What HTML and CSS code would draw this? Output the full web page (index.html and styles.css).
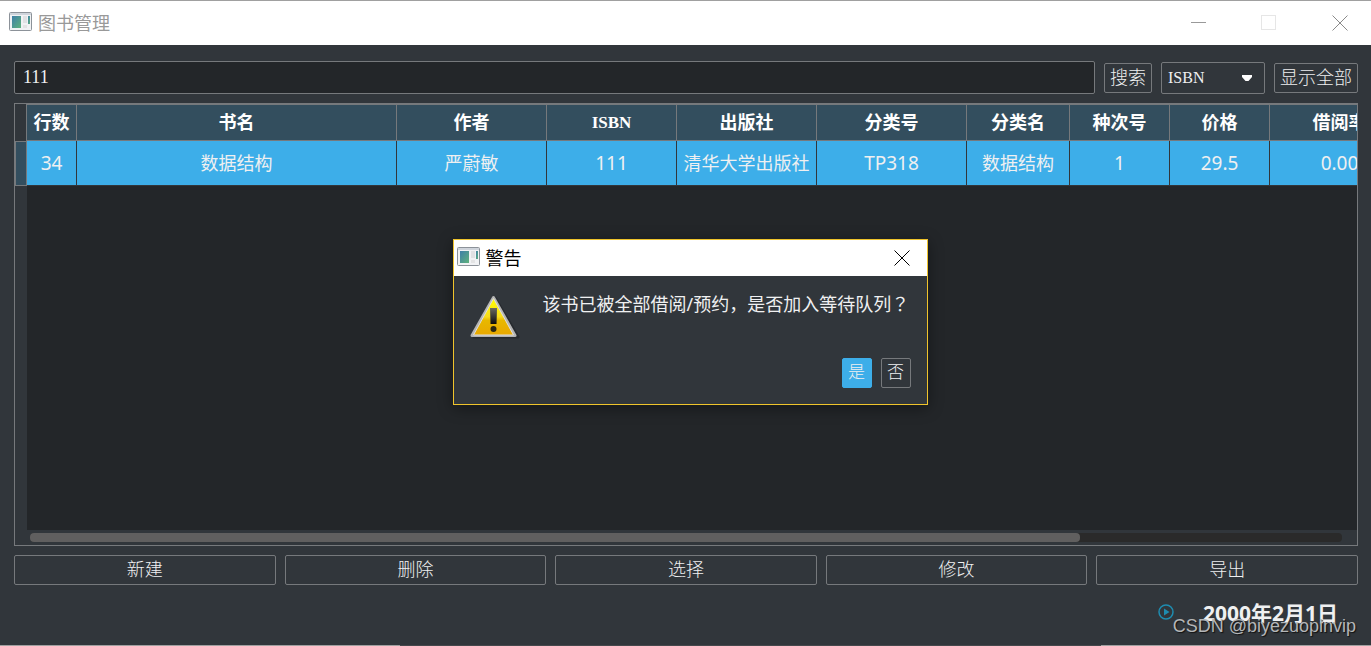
FILE: index.html
```html
<!DOCTYPE html>
<html lang="zh-CN">
<head>
    <meta charset="UTF-8">
    <meta name="viewport" content="width=device-width, initial-scale=1.0">
    <title>图书管理</title>
    <link rel="stylesheet" href="styles.css">
</head>
<body>
    <svg width="0" height="0" class="defs" aria-hidden="true">
        <defs>
            <linearGradient id="pane" x1="0" y1="0" x2="1" y2="1">
                <stop offset="0" stop-color="#3f7fa8"/>
                <stop offset="1" stop-color="#5fb27c"/>
            </linearGradient>
            <linearGradient id="yellow" x1="0" y1="0" x2="0" y2="1">
                <stop offset="0" stop-color="#ffff00"/>
                <stop offset="0.5" stop-color="#f8dc1c"/>
                <stop offset="0.6" stop-color="#e8b800"/>
                <stop offset="1" stop-color="#e9a800"/>
            </linearGradient>
            <linearGradient id="mark" x1="0" y1="0" x2="0" y2="1">
                <stop offset="0" stop-color="#6a6a60"/>
                <stop offset="1" stop-color="#0c0c0c"/>
            </linearGradient>
            <symbol id="app-icon" viewBox="0 0 24 20">
                <rect x="0.5" y="0.5" width="22" height="18" rx="1" fill="#f1f2f4" stroke="#8c9299"/>
                <rect x="1" y="1" width="21" height="2" fill="#cfd4db"/>
                <rect x="3" y="4" width="9" height="12" fill="url(#pane)"/>
                <rect x="14" y="4" width="4" height="7" fill="#e0e1e3"/>
                <rect x="14" y="13" width="4" height="3" fill="#e3e3e4"/>
                <rect x="19" y="4" width="2" height="8" fill="url(#pane)"/>
            </symbol>
        </defs>
    </svg>

    <header class="titlebar">
        <svg class="app-icon"><use href="#app-icon"/></svg>
        <h1>图书管理</h1>
        <div class="window-buttons">
            <button type="button" aria-label="最小化">
                <svg width="16" height="16"><path d="M0 7.5H15" stroke="#999"/></svg>
            </button>
            <button type="button" aria-label="最大化" disabled>
                <svg width="16" height="16"><rect x="0.5" y="0.5" width="14" height="14" fill="none" stroke="#e6e6e6"/></svg>
            </button>
            <button type="button" aria-label="关闭">
                <svg width="16" height="16"><path d="M0.5 0.5L15.5 15.5M15.5 0.5L0.5 15.5" stroke="#8a8a8a"/></svg>
            </button>
        </div>
    </header>

    <main>
        <form class="search">
            <input type="text" id="keyword" value="111" aria-label="关键字">
            <button type="button">搜索</button>
            <div class="select">
                <select aria-label="搜索字段">
                    <option>ISBN</option>
                    <option>书名</option>
                    <option>作者</option>
                </select>
                <svg width="12" height="8"><path d="M1 1H11V3L7.500 7H4.500L1 3Z" fill="#fff"/></svg>
            </div>
            <button type="button">显示全部</button>
        </form>

        <div class="grid">
            <div class="view">
                <table>
                    <colgroup>
                        <col class="w-mark"><col class="w-row"><col class="w-title"><col class="w-author">
                        <col class="w-isbn"><col class="w-press"><col class="w-code"><col class="w-class">
                        <col class="w-num"><col class="w-num"><col class="w-rate">
                    </colgroup>
                    <thead>
                        <tr>
                            <td class="corner"></td>
                            <th>行数</th>
                            <th>书名</th>
                            <th>作者</th>
                            <th class="latin">ISBN</th>
                            <th>出版社</th>
                            <th>分类号</th>
                            <th>分类名</th>
                            <th>种次号</th>
                            <th>价格</th>
                            <th>借阅率</th>
                        </tr>
                    </thead>
                    <tbody>
                        <tr>
                            <td class="marker"></td>
                            <td class="num">34</td>
                            <td>数据结构</td>
                            <td>严蔚敏</td>
                            <td class="num">111</td>
                            <td>清华大学出版社</td>
                            <td class="num">TP318</td>
                            <td>数据结构</td>
                            <td class="num">1</td>
                            <td class="num">29.5</td>
                            <td class="num">0.00</td>
                        </tr>
                    </tbody>
                </table>
            </div>
            <div class="scrollbar">
                <div class="track"><div class="thumb"></div></div>
            </div>
        </div>

        <div class="actions">
            <button type="button">新建</button>
            <button type="button">删除</button>
            <button type="button">选择</button>
            <button type="button">修改</button>
            <button type="button">导出</button>
        </div>
    </main>

    <footer>
        <svg width="16" height="16"><circle cx="8" cy="8" r="7" fill="none" stroke="#1e8cb0" stroke-width="1.500"/><path d="M6 4.500L11.500 8L6 11.500Z" fill="#1e8cb0"/></svg>
        <time datetime="2000-02-01">2000年2月1日</time>
        <span class="watermark">CSDN @biyezuopinvip</span>
    </footer>

    <div class="dialog" role="alertdialog" aria-labelledby="dialog-title">
        <div class="dialog-title">
            <svg class="app-icon"><use href="#app-icon"/></svg>
            <h2 id="dialog-title">警告</h2>
            <button type="button" aria-label="关闭">
                <svg width="16" height="16"><path d="M0.5 0.5L15.5 15.5M15.5 0.5L0.5 15.5" stroke="#000"/></svg>
            </button>
        </div>
        <div class="message">
            <svg width="50" height="48" viewBox="0 0 50 48">
                <path d="M25 6L48 45H4Z" fill="#1c1f22" stroke="#1c1f22" stroke-width="3" stroke-linejoin="round" opacity="0.5"/>
                <path d="M23.500 5.500L45 43.500H2Z" fill="#a8a8a8" stroke="#b4b4b4" stroke-width="3" stroke-linejoin="round"/>
                <path d="M23.500 6.500L43.500 43H3.500Z" fill="url(#yellow)" stroke="#dedede" stroke-width="1" stroke-linejoin="round"/>
                <path d="M20 16H27L26.500 32H20.500Z" fill="url(#mark)"/>
                <circle cx="23.500" cy="37" r="3" fill="#2c2810"/>
            </svg>
            <p>该书已被全部借阅/预约，是否加入等待队列<span lang="zh-TW">？</span></p>
        </div>
        <div class="dialog-buttons">
            <button type="button" class="primary">是</button>
            <button type="button">否</button>
        </div>
    </div>
</body>
</html>
```

FILE: styles.css
```css
* {
    box-sizing: border-box;
}
body {
    margin: 0;
    min-height: 100vh;
    display: flex;
    flex-direction: column;
    position: relative;
    overflow: hidden;
    background-color: #31363b;
    color: #eff0f1;
    border-top: 1px solid #a0a0a0;
    font-family: "Noto Sans", "Noto Sans CJK SC", sans-serif;
    font-size: 18px;
}
/* edge of the window behind */
body::after {
    content: "";
    height: 1px;
    background: linear-gradient(to right, #a0a0a0 400px, #45484c 400px, #45484c calc(100% - 270px), #a0a0a0 calc(100% - 270px));
}
.defs {
    position: absolute;
}
h1, h2, p {
    margin: 0;
    font-size: 18px;
    font-weight: 400;
    line-height: 24px;
}
button, input, select {
    height: 30px;
    padding: 0 6px;
    border: 1px solid #76797c;
    border-radius: 2px;
    background-color: transparent;
    color: #eff0f1;
    font-family: "Liberation Serif", "Noto Sans CJK SC", serif;
    font-size: 17px;
    font-weight: 300;
    line-height: 28px;
}

/* title bar */
.titlebar {
    display: flex;
    align-items: center;
    height: 44px;
    padding-left: 9px;
    background-color: #fff;
    color: #999;
}
.app-icon {
    width: 24px;
    height: 20px;
    margin-right: 5px;
}
.titlebar .app-icon, .dialog-title .app-icon {
    margin-bottom: 2px;
}
.window-buttons {
    display: flex;
    margin-left: auto;
}
.window-buttons button, .dialog-title button {
    display: flex;
    align-items: center;
    justify-content: center;
    width: 70px;
    padding: 0;
    border: none;
}
.window-buttons button:last-child {
    width: 67px;
    padding-left: 4px;
}

/* search row */
main {
    flex: 1;
    display: flex;
    flex-direction: column;
    gap: 9px;
    padding: 16px 13px 0 14px;
}
.search {
    display: flex;
    align-items: center;
    gap: 9px;
}
.search input {
    flex: 1;
    height: 33px;
    padding: 0 8px;
    background-color: #232629;
    font-size: 18px;
}
.search button {
    padding: 0 5px;
    font-size: 18px;
}
.select {
    position: relative;
}
.select select {
    display: block;
    width: 104px;
    height: 32px;
    appearance: none;
    font-size: 16px;
}
.select svg {
    position: absolute;
    right: 12px;
    top: 12px;
    pointer-events: none;
}

/* book table */
.grid {
    flex: 1;
    display: flex;
    flex-direction: column;
    border: 1px solid #76797c;
}
.view {
    flex: 1;
    overflow: hidden;
    background: linear-gradient(to right, #31363b 12px, #232629 12px);
}
table {
    width: 1395px;
    table-layout: fixed;
    border-collapse: separate;
    border-spacing: 0;
}
th, td {
    padding: 0;
    text-align: center;
    white-space: nowrap;
    overflow: hidden;
}
th {
    height: 37px;
    border: 1px solid #76797c;
    border-left: none;
    background-color: #334e5e;
    color: #fff;
    font-family: "Liberation Serif", "Noto Sans CJK SC", serif;
    font-size: 18px;
    line-height: 28px;
}
th.latin {
    font-size: 17px;
}
tbody td {
    height: 45px;
    border-right: 1px solid #31363b;
    border-bottom: 1px solid #31363b;
    background-color: #3daee9;
    line-height: 24px;
}
tbody td.num {
    font-size: 19px;
}
.corner {
    border-right: 1px solid #76797c;
}
tbody td.marker {
    border: 1px solid #76797c;
    background-color: #334e5e;
}
.w-mark { width: 12px; }
.w-row { width: 50px; }
.w-title { width: 320px; }
.w-author, .w-code { width: 150px; }
.w-isbn { width: 130px; }
.w-press, .w-rate { width: 140px; }
.w-class { width: 103px; }
.w-num { width: 100px; }
.scrollbar {
    padding: 3px 15px;
}
.track {
    height: 9px;
    border-radius: 4px;
    background-color: #2a2a2a;
}
.thumb {
    width: 80%;
    height: 9px;
    border-radius: 4px;
    background-color: #605f5f;
}

/* bottom */
.actions {
    display: grid;
    grid-template-columns: repeat(5, 1fr);
    gap: 9px;
}
.actions button {
    font-size: 18px;
}
footer {
    position: relative;
    display: flex;
    align-items: center;
    justify-content: flex-end;
    gap: 29px;
    height: 60px;
    padding: 0 33px 6px 0;
}
time {
    font-size: 21px;
    font-weight: bold;
}
.watermark {
    position: absolute;
    right: 15px;
    bottom: 9px;
    color: #b4b6b8;
    font-family: "Liberation Sans", Arial, sans-serif;
    font-size: 18px;
    line-height: 20px;
    text-shadow: 1px 1px 1px #111;
}

/* warning dialog */
.dialog {
    position: absolute;
    left: 50%;
    top: 238px;
    width: 475px;
    margin-left: -233px;
    border: 1px solid #f0c42c;
    background-color: #31363b;
    box-shadow: 0 3px 14px rgba(0, 0, 0, 0.4);
}
.dialog-title {
    display: flex;
    align-items: center;
    height: 36px;
    padding-left: 3px;
    background-color: #fff;
    color: #000;
}
.dialog-title button {
    width: 50px;
    margin-left: auto;
}
.message {
    display: flex;
    gap: 23px;
    padding: 16px 16px 0;
}
.dialog-buttons {
    display: flex;
    justify-content: flex-end;
    gap: 9px;
    padding: 18px 16px 16px;
}
.dialog-buttons button {
    width: 30px;
    padding: 0;
}
.dialog-buttons .primary {
    border-color: #3daee9;
    background-color: #3daee9;
}
```
